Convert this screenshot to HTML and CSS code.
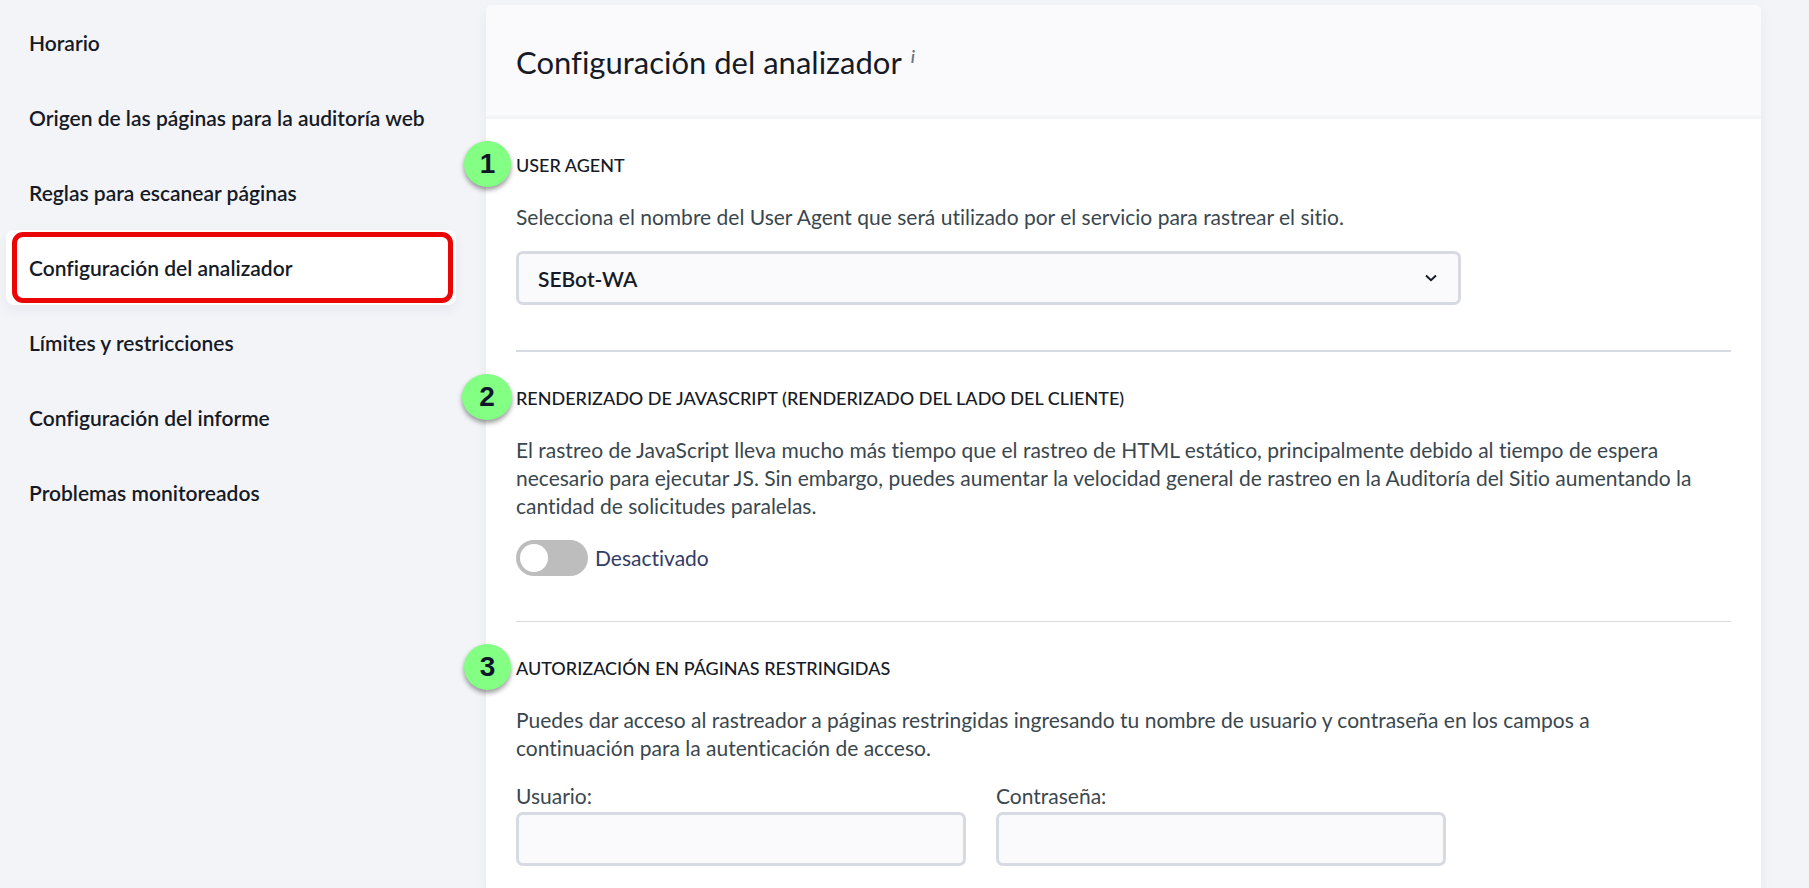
FILE: index.html
```html
<!DOCTYPE html>
<html lang="es">
<head>
  <meta charset="UTF-8">
  <meta name="viewport" content="width=device-width, initial-scale=1">
  <title>Configuración del analizador</title>
  <link rel="stylesheet" href="styles.css">
</head>

<body>
<div class="page">
  <nav class="menu">
    <a href="#horario">Horario</a>
    <a href="#origen">Origen de las páginas para la auditoría web</a>
    <a href="#reglas">Reglas para escanear páginas</a>
    <a href="#analizador" class="active">Configuración del analizador</a>
    <a href="#limites">Límites y restricciones</a>
    <a href="#informe">Configuración del informe</a>
    <a href="#problemas">Problemas monitoreados</a>
  </nav>

  <main class="card">
    <header class="card-header">
      <h1>Configuración del analizador</h1>
      <span class="info">i</span>
    </header>

    <div class="card-body">
      <section class="thick">
        <h2><span class="step">1</span><label for="agent">USER AGENT</label></h2>
        <p>Selecciona el nombre del User Agent que será utilizado por el servicio para rastrear el sitio.</p>
        <div class="select">
          <select id="agent">
            <option>SEBot-WA</option>
          </select>
          <svg class="arrow" width="12" height="8" viewBox="0 0 12 8">
            <path d="M1 1.5 L6 6.2 L11 1.5" fill="none" stroke="#161a26" stroke-width="2"/>
          </svg>
        </div>
      </section>

      <section>
        <h2><span class="step wide">2</span>RENDERIZADO DE JAVASCRIPT (RENDERIZADO DEL LADO DEL CLIENTE)</h2>
        <p>El rastreo de JavaScript lleva mucho más tiempo que el rastreo de HTML estático, principalmente debido al tiempo de espera<br>
          necesario para ejecutar JS. Sin embargo, puedes aumentar la velocidad general de rastreo en la Auditoría del Sitio aumentando la<br>
          cantidad de solicitudes paralelas.</p>
        <label class="switch">
          <input type="checkbox">
          <span>Desactivado</span>
        </label>
      </section>

      <section>
        <h2><span class="step">3</span>AUTORIZACIÓN EN PÁGINAS RESTRINGIDAS</h2>
        <p>Puedes dar acceso al rastreador a páginas restringidas ingresando tu nombre de usuario y contraseña en los campos a<br>
          continuación para la autenticación de acceso.</p>
        <div class="fields">
          <div class="field">
            <label for="user">Usuario:</label>
            <input type="text" id="user">
          </div>
          <div class="field">
            <label for="password">Contraseña:</label>
            <input type="password" id="password">
          </div>
        </div>
      </section>
    </div>
  </main>
</div>
</body>
</html>
```
FILE: styles.css
```css
* {
  box-sizing: border-box;
}

body {
  margin: 0;
  background: #f3f4f8;
  color: #3a474e;
  font: 21px/28px Lato, "Noto Sans", sans-serif;
  font-variant-ligatures: none;
}

.page {
  display: flex;
  gap: 30px;
  min-height: 100vh;
  padding: 5px 48px 0 6px;
}

/* Left menu */
.menu {
  flex: 0 0 450px;
}

.menu a {
  display: flex;
  align-items: center;
  height: 75px;
  padding: 0 23px;
  border-radius: 8px;
  color: #161a26;
  font-weight: 600;
  text-decoration: none;
  white-space: nowrap;
}

.menu a.active {
  position: relative;
  background: #fff;
  box-shadow: 0 5px 12px rgba(40, 50, 90, 0.06);
}

.menu a.active:after {
  content: '';
  position: absolute;
  top: 2px;
  right: 3px;
  bottom: 2px;
  left: 6px;
  border: 5px solid #eb0606;
  border-radius: 11px;
}

/* Card */
.card {
  flex: 1;
  min-width: 0;
  background: #fff;
  border-radius: 6px 6px 0 0;
  box-shadow: 0 5px 12px rgba(40, 50, 90, 0.06);
}

.card-header {
  display: flex;
  gap: 9px;
  height: 114px;
  padding: 37px 30px 0;
  background: #fafafd;
  border-bottom: 3px solid #f3f4f8;
  border-radius: 6px 6px 0 0;
}

h1 {
  margin: 0;
  color: #161a26;
  font-size: 31px;
  line-height: 40px;
  font-weight: 400;
}

.info {
  color: #6b7780;
  font-size: 18px;
  font-style: italic;
  font-weight: 600;
}

.card-body {
  padding: 0 30px;
}

section {
  padding: 34px 0 45px;
  border-bottom: 1px solid #d7d9e3;
}

section.thick {
  border-bottom-width: 2px;
}

section:last-child {
  padding-bottom: 20px;
  border-bottom: 0;
}

h2 {
  position: relative;
  margin: 0 0 26px;
  color: #161a26;
  font-size: 18px;
  line-height: 24px;
  font-weight: 500;
}

.step {
  position: absolute;
  top: -12px;
  left: -52px;
  width: 47px;
  height: 46px;
  border-radius: 50%;
  background: #83ff83;
  box-shadow: 0 3px 5px rgba(0, 0, 0, 0.4);
  color: #10152a;
  font: bold 28px/45px "Liberation Sans", sans-serif;
  text-align: center;
}

.step.wide {
  left: -54px;
  width: 50px;
}

p {
  margin: 0 0 20px;
}

/* Controls */
select,
.field input {
  display: block;
  width: 100%;
  height: 54px;
  padding: 0 19px;
  border: 3px solid #d7d9e3;
  border-radius: 7px;
  background: #fafafd;
  color: #161a26;
  font: 600 21px Lato, "Noto Sans", sans-serif;
}

.select {
  position: relative;
  max-width: 945px;
}

select {
  appearance: none;
}

.arrow {
  position: absolute;
  top: 23px;
  right: 24px;
  pointer-events: none;
}

.switch {
  display: flex;
  align-items: center;
  gap: 7px;
  color: #333c66;
}

.switch input {
  appearance: none;
  width: 72px;
  height: 36px;
  margin: 0;
  padding: 4px;
  border-radius: 18px;
  background: #bdbdbd;
}

.switch input:before {
  content: '';
  display: block;
  width: 28px;
  height: 28px;
  border-radius: 50%;
  background: #fff;
}

.switch input:checked {
  background: #2fc26e;
}

.switch input:checked:before {
  margin-left: auto;
}

.fields {
  display: flex;
  gap: 30px;
}

.field {
  flex: 0 1 450px;
}

.field label {
  display: block;
  margin-bottom: 2px;
}
```
